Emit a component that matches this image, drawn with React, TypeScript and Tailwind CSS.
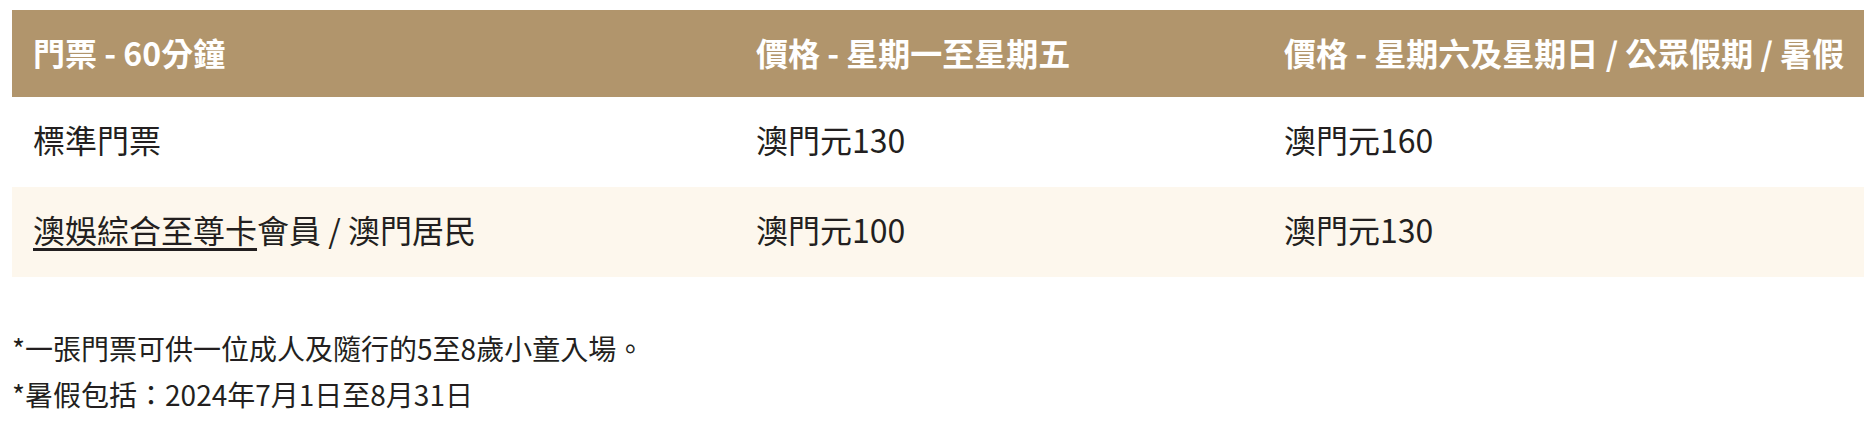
const rows = [
  { name: "標準門票", weekday: "澳門元130", weekend: "澳門元160", member: false },
  { name: "會員 / 澳門居民", weekday: "澳門元100", weekend: "澳門元130", member: true },
];

export default function App() {
  return (
    <div className="min-h-screen bg-white pl-[12px] pt-[10px] font-['Noto_Sans_CJK_TC','Noto_Sans',sans-serif] text-[#231f20]">
      <div className="grid h-[87px] grid-cols-[723px_528px_1fr] items-center bg-[#b1956c] pb-[4px] text-[32px] font-bold leading-none text-white">
        <div className="pl-[21px]">門票 - 60分鐘</div>
        <div className="pl-[21px]">價格 - 星期一至星期五</div>
        <div className="whitespace-nowrap pl-[21px]">價格 - 星期六及星期日 / 公眾假期 / 暑假</div>
      </div>

      {rows.map((row, i) => (
        <div
          key={row.weekday + i}
          className={
            "grid h-[90px] grid-cols-[723px_528px_1fr] items-center pb-[6px] text-[32px] leading-none " +
            (i % 2 === 1 ? "bg-[#fdf7ed]" : "bg-white")
          }
        >
          <div className="pl-[21px]">
            {row.member ? (
              <>
                <a href="#" className="underline decoration-[3px] underline-offset-[5px]">
                  澳娛綜合至尊卡
                </a>
                {row.name}
              </>
            ) : (
              row.name
            )}
          </div>
          <div className="pl-[21px]">{row.weekday}</div>
          <div className="pl-[21px]">{row.weekend}</div>
        </div>
      ))}

      <div className="mt-[48px] text-[28px] leading-[46px]">
        <p>*一張門票可供一位成人及隨行的5至8歲小童入場。</p>
        <p>*暑假包括：2024年7月1日至8月31日</p>
      </div>
    </div>
  );
}
